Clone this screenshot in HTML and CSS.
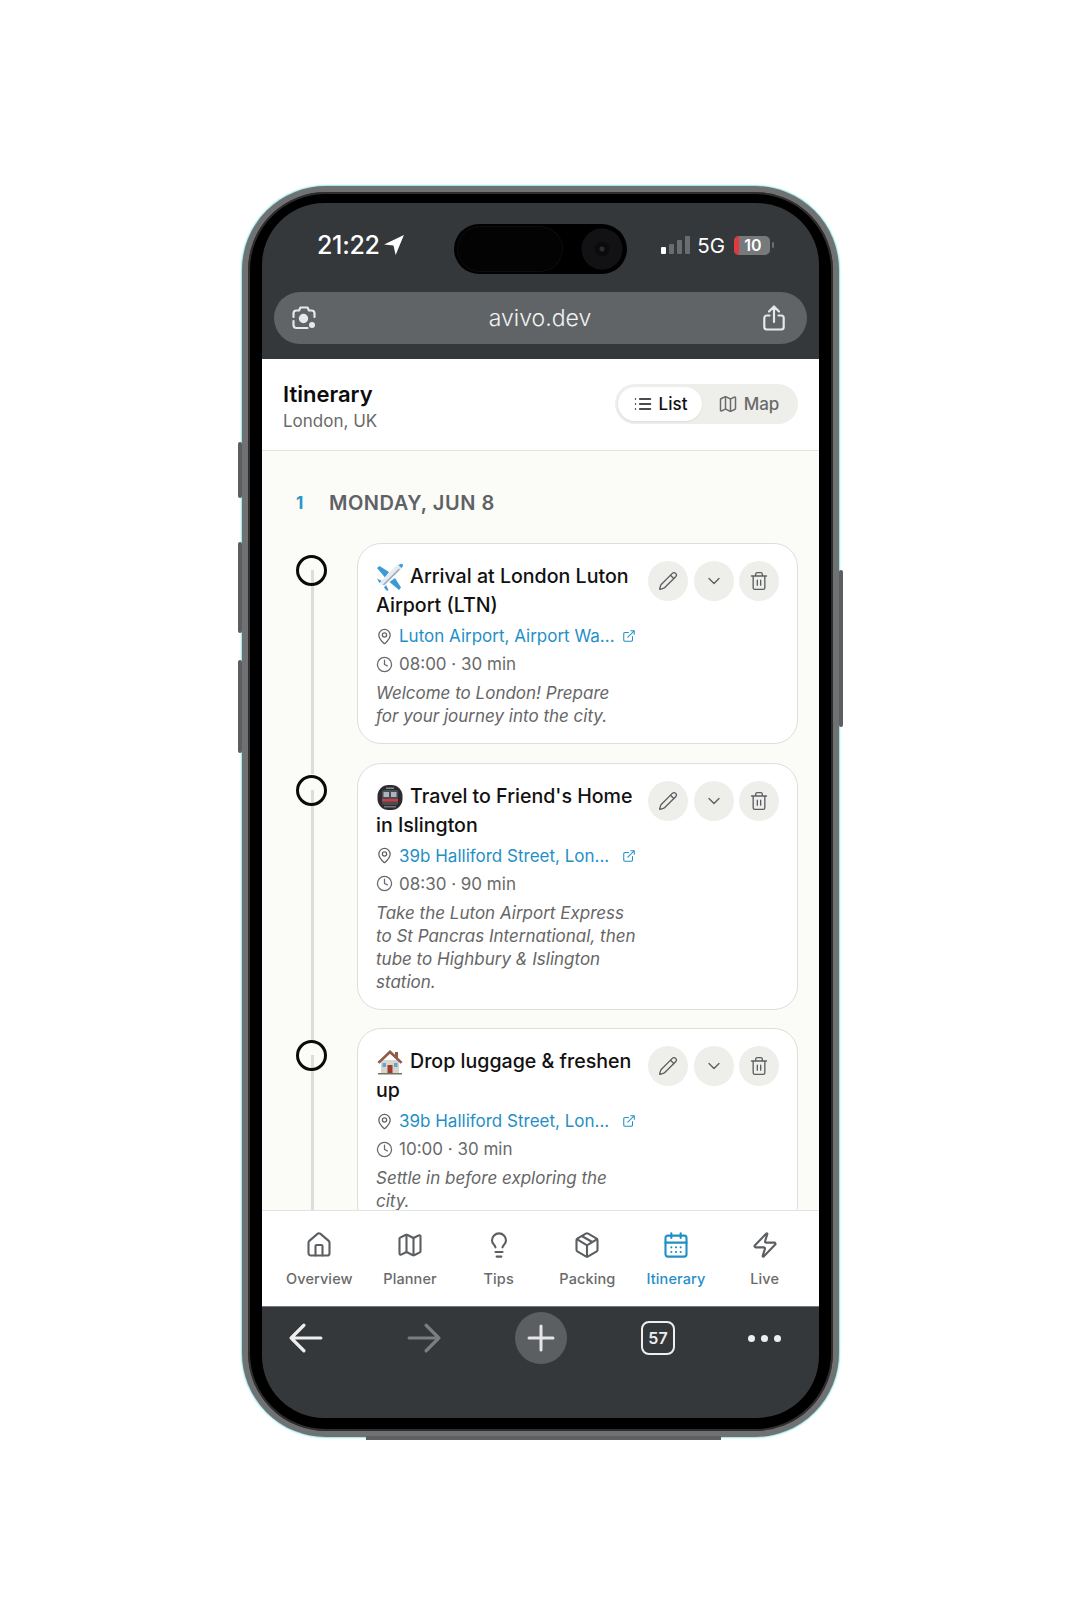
FILE: index.html
```html
<!DOCTYPE html>
<html>
<head>
  <title>Itinerary - avivo.dev</title>
  <link rel="stylesheet" href="styles.css">
</head>
<body>
  <!-- icon sprite -->
  <svg class="sprite" xmlns="http://www.w3.org/2000/svg">
    <symbol id="i-list" viewBox="0 0 24 24"><path d="M3 6h.01M8 6h13M3 12h.01M8 12h13M3 18h.01M8 18h13"/></symbol>
    <symbol id="i-map" viewBox="0 0 24 24"><path d="M14.106 5.553a2 2 0 0 0 1.788 0l3.659-1.83A1 1 0 0 1 21 4.619v12.764a1 1 0 0 1-.553.894l-4.553 2.277a2 2 0 0 1-1.788 0l-4.212-2.106a2 2 0 0 0-1.788 0l-3.659 1.83A1 1 0 0 1 3 19.381V6.618a1 1 0 0 1 .553-.894l4.553-2.277a2 2 0 0 1 1.788 0z"/><path d="M15 5.764v15M9 3.236v15"/></symbol>
    <symbol id="i-pencil" viewBox="0 0 24 24"><path d="M21.174 6.812a1 1 0 0 0-3.986-3.987L3.842 16.174a2 2 0 0 0-.5.83l-1.321 4.352a.5.5 0 0 0 .623.622l4.353-1.32a2 2 0 0 0 .83-.497z"/><path d="m15 5 4 4"/></symbol>
    <symbol id="i-chevron" viewBox="0 0 24 24"><path d="m6 9 6 6 6-6"/></symbol>
    <symbol id="i-trash" viewBox="0 0 24 24"><path d="M3 6h18M19 6v14c0 1-1 2-2 2H7c-1 0-2-1-2-2V6M8 6V4c0-1 1-2 2-2h4c1 0 2 1 2 2v2M10 11v6M14 11v6"/></symbol>
    <symbol id="i-pin" viewBox="0 0 24 24"><path d="M20 10c0 4.993-5.539 10.193-7.399 11.799a1 1 0 0 1-1.202 0C9.539 20.193 4 14.993 4 10a8 8 0 0 1 16 0"/><circle cx="12" cy="10" r="3"/></symbol>
    <symbol id="i-link" viewBox="0 0 24 24"><path d="M15 3h6v6M10 14 21 3M18 13v6a2 2 0 0 1-2 2H5a2 2 0 0 1-2-2V8a2 2 0 0 1 2-2h6"/></symbol>
    <symbol id="i-clock" viewBox="0 0 24 24"><circle cx="12" cy="12" r="10"/><path d="M12 6v6l4 2"/></symbol>
    <symbol id="i-house" viewBox="0 0 24 24"><path d="M15 21v-8a1 1 0 0 0-1-1h-4a1 1 0 0 0-1 1v8"/><path d="M3 10a2 2 0 0 1 .709-1.528l7-5.999a2 2 0 0 1 2.582 0l7 5.999A2 2 0 0 1 21 10v9a2 2 0 0 1-2 2H5a2 2 0 0 1-2-2z"/></symbol>
    <symbol id="i-bulb" viewBox="0 0 24 24"><path d="M15 14c.2-1 .7-1.7 1.5-2.5 1-.9 1.5-2.2 1.5-3.5A6 6 0 0 0 6 8c0 1 .2 2.2 1.5 3.5.7.7 1.3 1.5 1.5 2.5M9 18h6M10 22h4"/></symbol>
    <symbol id="i-package" viewBox="0 0 24 24"><path d="M11 21.73a2 2 0 0 0 2 0l7-4A2 2 0 0 0 21 16V8a2 2 0 0 0-1-1.73l-7-4a2 2 0 0 0-2 0l-7 4A2 2 0 0 0 3 8v8a2 2 0 0 0 1 1.73z"/><path d="M12 22V12M3.3 7l7.703 4.734a2 2 0 0 0 1.994 0L20.7 7M7.5 4.27l9 5.15"/></symbol>
    <symbol id="i-calendar" viewBox="0 0 24 24"><rect x="3" y="4" width="18" height="18" rx="2"/><path d="M8 2v4M16 2v4M3 10h18M8 14h.01M12 14h.01M16 14h.01M8 18h.01M12 18h.01M16 18h.01"/></symbol>
    <symbol id="i-zap" viewBox="0 0 24 24"><path d="M4 14a1 1 0 0 1-.78-1.63l9.9-10.2a.5.5 0 0 1 .86.46l-1.92 6.02A1 1 0 0 0 13 10h7a1 1 0 0 1 .78 1.63l-9.9 10.2a.5.5 0 0 1-.86-.46l1.92-6.02A1 1 0 0 0 11 14z"/></symbol>
  </svg>

  <div class="phone">
    <i class="side-btn btn-a"></i>
    <i class="side-btn btn-b"></i>
    <i class="side-btn btn-c"></i>
    <i class="side-btn btn-d"></i>
    <i class="lip"></i>

    <div class="screen">
      <div class="island"><span class="island-pill"></span><span class="island-cam"></span></div>

      <div class="browser-top">
        <div class="statusbar">
          <div class="clock">21:22
            <svg class="arrow-loc" viewBox="0 0 20 20"><path d="M19 1 1 9.500l8.500 1L11.500 19z"/></svg>
          </div>
          <div class="status-right">
            <span class="bars"><b class="on"></b><b></b><b></b><b></b></span>
            <span class="net">5G</span>
            <span class="battery"><span class="battery-low"></span><span class="battery-num">10</span></span>
            <i class="battery-cap"></i>
          </div>
        </div>
        <div class="address">
          <svg class="addr-icon" viewBox="0 0 28 28"><path d="M9 6.500 10.500 3.500h7L19 6.500h2.500a3 3 0 0 1 3 3V13M3.500 13V9.500a3 3 0 0 1 3-3H9M3.500 17v4a3 3 0 0 0 3 3h11"/><circle cx="13.500" cy="14.500" r="3.600" fill="#e8e8e8"/><circle cx="22" cy="21" r="3" fill="#e8e8e8" stroke="none"/></svg>
          <span class="addr-text">avivo.dev</span>
          <svg class="addr-icon" viewBox="0 0 28 28"><path d="M14 18V2.500M9 7.500l5-5 5 5M9.500 11.500H6.800a2.500 2.500 0 0 0-2.500 2.500v9a2.500 2.500 0 0 0 2.500 2.500h14.400a2.500 2.500 0 0 0 2.500-2.500v-9a2.500 2.500 0 0 0-2.500-2.500h-2.700"/></svg>
        </div>
      </div>

      <header class="app-header">
        <div class="app-title">
          <h1>Itinerary</h1>
          <p>London, UK</p>
        </div>
        <div class="toggle">
          <span class="toggle-item active"><svg class="ico"><use href="#i-list"/></svg>List</span>
          <span class="toggle-item"><svg class="ico"><use href="#i-map"/></svg>Map</span>
        </div>
      </header>

      <main class="content">
        <div class="day-head"><span class="day-num">1</span><span class="day-name">MONDAY, JUN 8</span></div>

        <div class="stop">
          <div class="rail"><span class="dot"></span><span class="line"></span></div>
          <article class="card">
            <div class="card-body">
              <h3><svg class="emoji" viewBox="0 0 28 28"><path fill="#3d9ad6" d="M13 9 3.500 3 1 5l8 9.500zM19 15l6 9.500-2 2.500-9.500-8zM1 15.500l5 2.500-2.500 2zM8 24.500l2-2.500 2.500 5-1.500 1z"/><path fill="#e6ebf0" d="M27 1c-1.500-1.300-4.500-.6-6.300 1.200L5 18l-1 3.500 2.500 .5 3.500-1L25.800 5.300C27.600 3.500 28.300 2.300 27 1z"/><path fill="#93a5b4" d="m7 21.500 16-16 .9.9-16 16z"/><path fill="#3d9ad6" d="M26.600 1.300c.7.900.2 2.400-1.200 3.700l-2.800-2.800c1.300-1.200 3-1.600 4-.9z"/></svg>Arrival at London Luton Airport (LTN)</h3>
              <div class="meta place"><svg class="ico"><use href="#i-pin"/></svg><span class="place-name">Luton Airport, Airport Wa...</span><svg class="ico ext"><use href="#i-link"/></svg></div>
              <div class="meta"><svg class="ico"><use href="#i-clock"/></svg><span>08:00 · 30 min</span></div>
              <p class="note">Welcome to London! Prepare for your journey into the city.</p>
            </div>
            <div class="actions">
              <span class="round"><svg class="ico"><use href="#i-pencil"/></svg></span>
              <span class="round"><svg class="ico"><use href="#i-chevron"/></svg></span>
              <span class="round"><svg class="ico"><use href="#i-trash"/></svg></span>
            </div>
          </article>
        </div>

        <div class="stop">
          <div class="rail"><span class="dot"></span><span class="line"></span></div>
          <article class="card">
            <div class="card-body">
              <h3><svg class="emoji" viewBox="0 0 28 28"><rect x="1.500" y="2" width="25" height="25" rx="11" fill="#2b2b30"/><rect x="6" y="7" width="16" height="15" rx="2" fill="#4a4c52"/><rect x="7.500" y="9" width="5.500" height="5" fill="#a9b6c2"/><rect x="15" y="9" width="5.500" height="5" fill="#a9b6c2"/><rect x="6" y="16" width="16" height="2.500" fill="#d23c3c"/><rect x="10" y="4.500" width="8" height="1.500" fill="#888"/><rect x="8" y="23" width="12" height="1.500" fill="#777"/></svg>Travel to Friend's Home in Islington</h3>
              <div class="meta place"><svg class="ico"><use href="#i-pin"/></svg><span class="place-name">39b Halliford Street, Lon...</span><svg class="ico ext"><use href="#i-link"/></svg></div>
              <div class="meta"><svg class="ico"><use href="#i-clock"/></svg><span>08:30 · 90 min</span></div>
              <p class="note">Take the Luton Airport Express to St Pancras International, then tube to Highbury &amp; Islington station.</p>
            </div>
            <div class="actions">
              <span class="round"><svg class="ico"><use href="#i-pencil"/></svg></span>
              <span class="round"><svg class="ico"><use href="#i-chevron"/></svg></span>
              <span class="round"><svg class="ico"><use href="#i-trash"/></svg></span>
            </div>
          </article>
        </div>

        <div class="stop">
          <div class="rail"><span class="dot"></span><span class="line"></span></div>
          <article class="card">
            <div class="card-body">
              <h3><svg class="emoji" viewBox="0 0 28 28"><path fill="#d9d4cc" d="M5 12h18v13H5z"/><path fill="#8f5a4a" d="M14 2 1.500 14l1.800 1.800L14 5.800l10.700 10 1.800-1.800-4.500-4.300V4h-3v2.800z"/><rect x="11.500" y="17" width="5" height="8" fill="#a23a2a"/><rect x="6.500" y="15" width="3.500" height="4" fill="#5ba7d8"/><rect x="18" y="15" width="3.500" height="4" fill="#5ba7d8"/><path fill="#6d7660" d="M2 25h24v1.500H2z"/></svg>Drop luggage &amp; freshen up</h3>
              <div class="meta place"><svg class="ico"><use href="#i-pin"/></svg><span class="place-name">39b Halliford Street, Lon...</span><svg class="ico ext"><use href="#i-link"/></svg></div>
              <div class="meta"><svg class="ico"><use href="#i-clock"/></svg><span>10:00 · 30 min</span></div>
              <p class="note">Settle in before exploring the city.</p>
            </div>
            <div class="actions">
              <span class="round"><svg class="ico"><use href="#i-pencil"/></svg></span>
              <span class="round"><svg class="ico"><use href="#i-chevron"/></svg></span>
              <span class="round"><svg class="ico"><use href="#i-trash"/></svg></span>
            </div>
          </article>
        </div>
      </main>

      <nav class="tabs">
        <span class="tab"><svg class="ico"><use href="#i-house"/></svg>Overview</span>
        <span class="tab"><svg class="ico"><use href="#i-map"/></svg>Planner</span>
        <span class="tab"><svg class="ico"><use href="#i-bulb"/></svg>Tips</span>
        <span class="tab"><svg class="ico"><use href="#i-package"/></svg>Packing</span>
        <span class="tab current"><svg class="ico"><use href="#i-calendar"/></svg>Itinerary</span>
        <span class="tab"><svg class="ico"><use href="#i-zap"/></svg>Live</span>
      </nav>

      <div class="browser-bottom">
        <svg class="nav-arrow" viewBox="0 0 32 28"><path d="M30 14H2M14 2 2 14l12 12"/></svg>
        <svg class="nav-arrow dim" viewBox="0 0 32 28"><path d="M2 14h28M18 2l12 12-12 12"/></svg>
        <span class="plus"><svg viewBox="0 0 28 28"><path d="M14 2v24M2 14h24"/></svg></span>
        <span class="tab-count">57</span>
        <span class="more"><i></i><i></i><i></i></span>
      </div>
    </div>
  </div>
</body>
</html>
```

FILE: styles.css
```css
* { box-sizing: border-box; }
html, body { margin: 0; height: 1620px; background: #fff; }
body {
  font-family: Inter, "Liberation Sans", sans-serif;
  padding: 186px 0 0 242px;
  overflow: hidden;
}
.sprite { display: none; }

/* phone frame */
.phone {
  position: relative;
  width: 597px;
  height: 1251px;
  padding: 11px 14px 13px;
  border: 6px solid #707173;
  border-radius: 84px;
  background: #000;
  box-shadow: 0 0 1.500px 1px #93e6e6, inset 0 0 0 2px #2e2e2e;
}
.side-btn {
  position: absolute;
  width: 4px;
  background: #5c5e60;
  border-radius: 2px;
}
.btn-a { left: -10px; top: 250px; height: 56px; }
.btn-b { left: -10px; top: 350px; height: 91px; }
.btn-c { left: -10px; top: 468px; height: 93px; }
.btn-d { right: -10px; top: 378px; height: 157px; }
.lip {
  position: absolute;
  left: 118px;
  right: 112px;
  bottom: -9px;
  height: 4px;
  background: #5d5f61;
}
.screen {
  position: relative;
  height: 100%;
  display: flex;
  flex-direction: column;
  overflow: hidden;
  border-radius: 62px;
  background: #35383b;
}
.island {
  position: absolute;
  left: 192px;
  top: 21px;
  width: 173px;
  height: 50px;
  display: flex;
  justify-content: space-between;
  padding: 3px 4px;
  background: #000;
  border-radius: 25px;
}
.island-pill { width: 104px; height: 44px; border-radius: 22px; background: #030303; box-shadow: 0 0 0 1px #0d0d0d; }
.island-cam {
  width: 42px; height: 44px; border-radius: 50%;
  background: radial-gradient(circle, #2c2e30 0 2px, #0b0b0c 3px 7px, #121214 8px 20px, #000 21px);
}

/* browser chrome */
.browser-top { height: 156px; flex: none; padding: 0 12px; }
.statusbar {
  height: 89px;
  display: flex;
  justify-content: space-between;
  align-items: center;
  padding: 0 33px 5px 43px;
  color: #fff;
}
.clock { display: flex; align-items: center; gap: 3px; font-size: 25px; font-weight: 500; letter-spacing: -.3px; }
.arrow-loc { width: 22px; height: 22px; fill: #fff; }
.status-right { display: flex; align-items: center; }
.bars { display: flex; align-items: flex-end; gap: 3px; height: 18px; margin-right: 7px; }
.bars b { width: 5px; background: #6a6d70; border-radius: 1px; }
.bars b:nth-child(1) { height: 7px; background: #fff; }
.bars b:nth-child(2) { height: 10px; }
.bars b:nth-child(3) { height: 14px; }
.bars b:nth-child(4) { height: 18px; }
.net { font-size: 20.500px; margin-right: 9px; }
.battery {
  display: flex;
  width: 36px;
  height: 19px;
  background: #77797b;
  border-radius: 5px;
  overflow: hidden;
}
.battery-low { width: 5px; background: #e03a3e; }
.battery-num { flex: 1; font-size: 16px; font-weight: 600; line-height: 19px; text-align: center; padding-right: 3px; }
.battery-cap { width: 2px; height: 6px; margin-left: 2px; background: #6a6d70; border-radius: 1px; }
.address {
  height: 52px;
  display: flex;
  justify-content: space-between;
  align-items: center;
  padding: 0 19px 0 16px;
  background: #606467;
  border-radius: 26px;
  color: #f2f2f2;
}
.addr-text { font-size: 23px; font-weight: 300; margin-left: 2px; }
.addr-icon { width: 28px; height: 28px; fill: none; stroke: #e8e8e8; stroke-width: 2.200; stroke-linecap: round; stroke-linejoin: round; }

/* app header */
.ico { fill: none; stroke: currentColor; stroke-width: 2; stroke-linecap: round; stroke-linejoin: round; flex: none; }
.app-header {
  height: 92px;
  flex: none;
  display: flex;
  justify-content: space-between;
  align-items: center;
  padding: 0 21px;
  background: #fff;
  border-bottom: 1px solid #e3e3e1;
}
.app-title { padding-top: 4px; }
.app-header h1 { margin: 0 0 1px; font-size: 22px; font-weight: 600; line-height: 28px; color: #0c0c0c; }
.app-header p { margin: 0; font-size: 17px; line-height: 24px; color: #6a6a6a; }
.toggle { display: flex; padding: 3px; width: 183px; height: 40px; margin-top: -2px; background: #eeeeeb; border-radius: 20px; }
.toggle-item {
  display: flex; align-items: center; justify-content: center; gap: 6px;
  flex: 1;
  font-size: 17px; font-weight: 500; color: #6a6a6a;
}
.toggle-item .ico { width: 20px; height: 20px; stroke-width: 1.800; }
.toggle-item.active { flex: none; width: 84px; background: #fff; border-radius: 17px; color: #111; box-shadow: 0 1px 2px rgba(0,0,0,.08); }

/* day list */
.content { flex: 1; min-height: 0; overflow: hidden; background: #fbfbf8; padding: 0 21px 0 34px; }
.day-head { display: flex; align-items: center; height: 92px; padding-top: 11px; }
.day-num { width: 33px; font-size: 17px; font-weight: 700; color: #2d94c9; }
.day-name { font-size: 20px; font-weight: 600; letter-spacing: .5px; color: #5f6265; }
.stop { display: flex; padding-bottom: 18.500px; }
.rail { width: 61px; flex: none; display: flex; flex-direction: column; padding-top: 12px; }
.dot { position: relative; z-index: 1; width: 31px; height: 31px; border: 3px solid #0a0a0a; border-radius: 50%; flex: none; }
.line { width: 3px; flex: 1; margin: -16px 0 -30px 15px; background: #dcdcda; }
.card {
  flex: 1;
  min-width: 0;
  display: flex;
  gap: 8px;
  padding: 18px 18px 15px;
  background: #fff;
  border: 1.500px solid #dededc;
  border-radius: 24px;
}
.card-body { flex: 1; min-width: 0; }
.card h3 { margin: 0 0 2px; font-size: 19.600px; font-weight: 450; line-height: 29px; color: #111; }
.emoji { width: 28px; height: 28px; vertical-align: -5px; margin: -3px 6px -3px 0; }
.meta { display: flex; align-items: center; height: 28px; font-size: 17px; color: #6a6a6a; }
.meta .ico { width: 17px; height: 17px; margin-right: 6px; stroke-width: 1.800; }
.place { color: #1f8fc6; }
.place > .ico:first-child { color: #5f6265; }
.place-name { width: 218px; white-space: nowrap; }
.place .ext { width: 14px; height: 14px; margin: 0 0 0 5px; color: #1f8fc6; }
.note { margin: 4px 4px 0 0; font-size: 17px; font-style: italic; line-height: 23px; color: #666; }
.actions { display: flex; gap: 5.500px; flex: none; margin-top: -1px; }
.round {
  width: 40px; height: 40px;
  display: flex; align-items: center; justify-content: center;
  background: #eeeeeb;
  border-radius: 50%;
  color: #5c5f62;
}
.round .ico { width: 20px; height: 20px; stroke-width: 1.600; }

/* bottom tabs */
.tabs {
  height: 96px;
  flex: none;
  display: grid;
  grid-template-columns: repeat(6, 1fr);
  padding: 20px 10px 0 15px;
  background: #fff;
  border-top: 1px solid #e3e3e1;
}
.tab { display: flex; flex-direction: column; align-items: center; gap: 11px; font-size: 14.500px; font-weight: 500; color: #6a6a6a; letter-spacing: .1px; }
.tab:first-child { margin-left: -4px; }
.tab .ico { width: 28px; height: 28px; stroke-width: 1.800; color: #5c5f62; }
.tab.current, .tab.current .ico { color: #1f8fc6; }

.browser-bottom {
  height: 112px;
  flex: none;
  display: flex;
  align-items: center;
  padding: 6px 38px 55px 27px;
  border-top: 1px solid #77797b;
}
.nav-arrow { width: 34px; height: 30px; fill: none; stroke: #eee; stroke-width: 3; stroke-linecap: round; stroke-linejoin: round; }
.nav-arrow.dim { margin-left: 84px; stroke: #7b7d7f; }
.plus { width: 52px; height: 52px; margin-left: 74px; display: flex; align-items: center; justify-content: center; background: #5b5f62; border-radius: 50%; }
.plus svg { width: 28px; height: 28px; fill: none; stroke: #e6e6e6; stroke-width: 3; stroke-linecap: round; }
.tab-count {
  width: 34px; height: 34px;
  margin-left: 74px;
  border: 2.500px solid #eee;
  border-radius: 8px;
  font-size: 16px; font-weight: 600; line-height: 30px; text-align: center;
  color: #eee;
}
.more { display: flex; gap: 6px; margin-left: auto; }
.more i { width: 7px; height: 7px; border-radius: 50%; background: #eee; }
```
